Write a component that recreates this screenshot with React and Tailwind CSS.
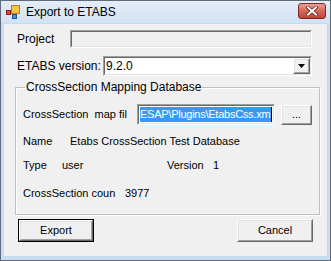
import React from 'react'

const font = { fontFamily: '"Liberation Sans", Arial, sans-serif' }

function Sunken({ className = '', children }) {
  // classic 3D sunken edge: gray/dark outside top-left, white/light bottom-right
  return (
    <div className={`border border-t-[#a0a0a0] border-l-[#a0a0a0] border-b-white border-r-white ${className}`}>
      <div className="h-full w-full border border-t-[#696969] border-l-[#696969] border-b-[#e3e3e3] border-r-[#e3e3e3] overflow-hidden">
        {children}
      </div>
    </div>
  )
}

function Raised({ className = '', children }) {
  return (
    <div className={`border border-t-white border-l-white border-b-[#696969] border-r-[#696969] ${className}`}>
      <div className="h-full w-full border border-t-[#e3e3e3] border-l-[#e3e3e3] border-b-[#a0a0a0] border-r-[#a0a0a0] flex items-center justify-center bg-[#f0f0f0]">
        {children}
      </div>
    </div>
  )
}

function AppIcon() {
  return (
    <svg width="14" height="14" viewBox="0 0 14 14">
      <rect x="5.5" y="0.5" width="8" height="8" fill="#f6c342" stroke="#c27a12" />
      <rect x="0.5" y="5.5" width="4" height="4" fill="#e2462f" stroke="#8e1e12" />
      <rect x="6.5" y="9.5" width="4" height="4" fill="#4f8ee6" stroke="#1d4f9a" />
    </svg>
  )
}

export default function App() {
  return (
    <div className="w-[331px] h-[261px] bg-white" style={font}>
      <div className="w-full h-full border border-[#5e6c7c] bg-[#cddcf0] flex flex-col">
        {/* title bar */}
        <div className="h-[22px] flex items-center pl-[5px] pr-[4px] bg-gradient-to-b from-[#e4edf8] to-[#d3e1f2]">
          <AppIcon />
          <span className="ml-[6px] text-[12px] text-black leading-none">Export to ETABS</span>
          <div className="ml-auto mt-[-2px] w-[28px] h-[16px] rounded-[3px] border border-[#7a2a26] bg-gradient-to-b from-[#e8a094] via-[#d4675a] to-[#c0453a] flex items-center justify-center">
            <svg width="12" height="10" viewBox="0 0 12 10">
              <path d="M2 1.5 L10 8.5 M10 1.5 L2 8.5" stroke="#5a1a16" strokeWidth="3.4" strokeLinecap="square" />
              <path d="M2 1.5 L10 8.5 M10 1.5 L2 8.5" stroke="#ffffff" strokeWidth="2" strokeLinecap="square" />
            </svg>
          </div>
        </div>

        {/* client area */}
        <div className="flex-1 mx-[2px] mb-[3px] border border-[#b6e0f5] bg-[#f0f0f0] flex flex-col text-[11px] text-black">
          <div className="flex items-center h-[18px] mt-[6px] pl-[13px] pr-[15px]">
            <span className="w-[53px] text-[12px]">Project</span>
            <Sunken className="flex-1 h-[18px]">
              <div className="h-full bg-[#f0f0f0]" />
            </Sunken>
          </div>

          <div className="flex items-center h-[20px] mt-[8px] pl-[13px] pr-[15px]">
            <span className="w-[86px] text-[12px]">ETABS version:</span>
            <Sunken className="flex-1 h-[20px]">
              <div className="h-full bg-white flex items-center">
                <span className="pl-[1px] text-[12px] leading-none">9.2.0</span>
                <Raised className="ml-auto w-[17px] h-full">
                  <svg width="7" height="4" viewBox="0 0 7 4">
                    <path d="M0 0 H7 L3.5 4 Z" fill="#000" />
                  </svg>
                </Raised>
              </div>
            </Sunken>
          </div>

          <fieldset className="mt-[5px] mx-[11px] mr-[9px] h-[134px] border border-[#c0c0c0] shadow-[inset_1px_1px_0_#ffffff,1px_1px_0_#ffffff] px-[7px]">
            <legend className="px-[1px] ml-[2px] leading-[13px] text-[12px]">CrossSection Mapping Database</legend>
            <div className="flex items-center h-[21px] mt-[10px]">
              <span className="w-[114px] whitespace-nowrap">CrossSection&nbsp; map fil</span>
              <Sunken className="w-[138px] h-[21px]">
                <div className="h-full bg-white flex items-center pl-[1px]">
                  <span className="bg-[#3399ff] text-white text-[11px] tracking-[-0.25px] leading-[15px] whitespace-nowrap pr-[1px]">ESAP\Plugins\EtabsCss.xm</span>
                  <span className="w-[1px] h-[15px] bg-black shrink-0" />
                </div>
              </Sunken>
              <Raised className="ml-[6px] w-[31px] h-[20px]">
                <span className="leading-none">...</span>
              </Raised>
            </div>
            <div className="flex items-center h-[13px] mt-[10px]">
              <span className="w-[47px]">Name</span>
              <span>Etabs CrossSection Test Database</span>
            </div>
            <div className="flex items-center h-[13px] mt-[11px]">
              <span className="w-[39px]">Type</span>
              <span className="w-[105px]">user</span>
              <span className="w-[46px]">Version</span>
              <span>1</span>
            </div>
            <div className="flex items-center h-[13px] mt-[15px]">
              <span className="w-[102px]">CrossSection coun</span>
              <span>3977</span>
            </div>
          </fieldset>

          <div className="flex justify-between mt-[4px] pl-[14px] pr-[14px]">
            <div className="border border-black">
              <Raised className="w-[74px] h-[21px]">
                <span>Export</span>
              </Raised>
            </div>
            <Raised className="w-[76px] h-[23px]">
              <span>Cancel</span>
            </Raised>
          </div>
        </div>
      </div>
    </div>
  )
}
